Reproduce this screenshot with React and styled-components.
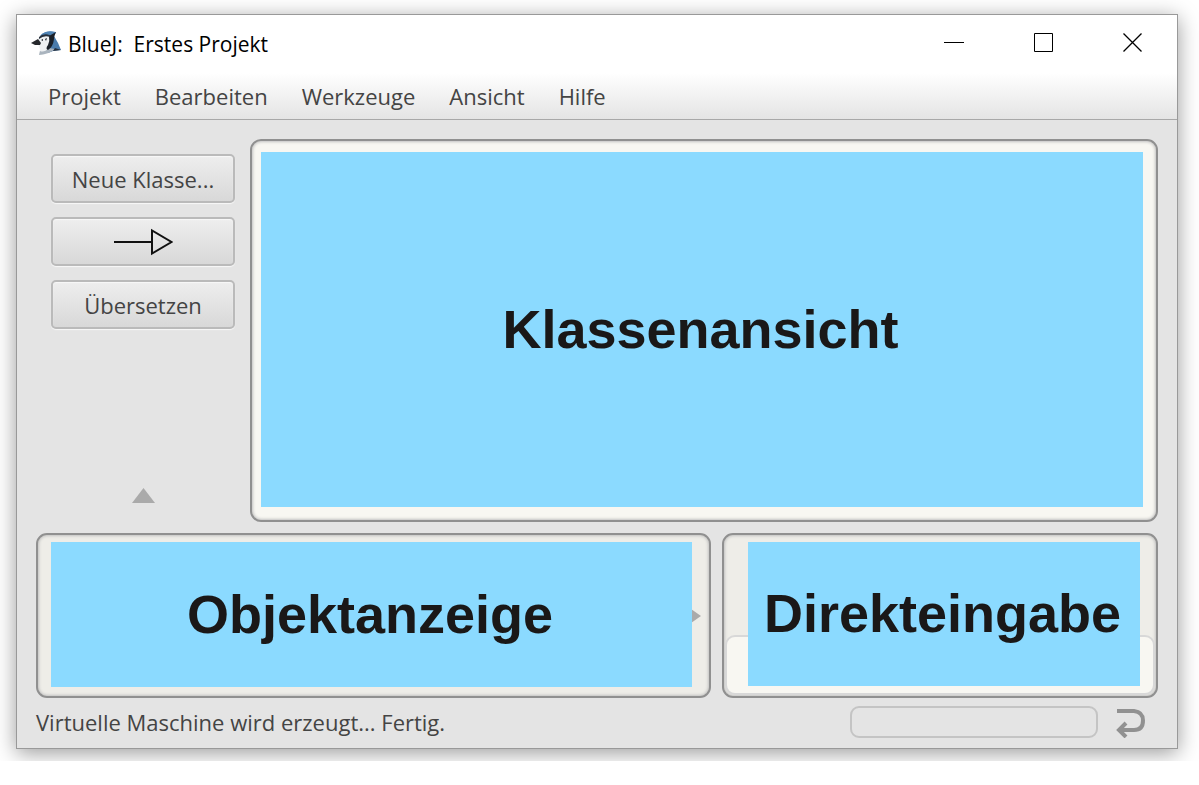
import React from "react";
import styled, { createGlobalStyle } from "styled-components";

//styling
const GlobalStyle = createGlobalStyle`
  * {
    box-sizing: border-box;
  }
  body {
    margin: 0;
    background: #fff;
    font-family: "Open Sans", "Noto Sans", sans-serif;
    font-size: 22px;
    line-height: 30px;
    color: #444;
  }
`;
const Desktop = styled.main`
  display: flex;
  min-height: calc(100vh - 24px);
  padding: 14px 21px 12px 16px;
  overflow: hidden;
`;
const Window = styled.section`
  flex: 1;
  display: flex;
  flex-direction: column;
  border: 1px solid #999;
  background: #e4e4e4;
  box-shadow: 0 4px 20px rgba(0, 0, 0, 0.4);
`;
const TitleBar = styled.header`
  display: flex;
  align-items: center;
  height: 58px;
  padding: 0 34px 0 14px;
  background: #fff;
  color: #000;
`;
const Title = styled.h1`
  flex: 1;
  margin: 0 0 0 6px;
  font-size: 21px;
  font-weight: 400;
  white-space: pre;
`;
const WindowButtons = styled.div`
  display: flex;
  gap: 70px;
  padding-bottom: 3px;
`;
const WindowButton = styled.button`
  display: flex;
  padding: 0;
  border: 0;
  background: none;
`;
const MenuBar = styled.nav`
  display: flex;
  align-items: center;
  gap: 34px;
  height: 47px;
  padding: 0 31px;
  border-bottom: 1px solid #a8a8a8;
  background: linear-gradient(#fff, #e4e4e4);
`;
const MenuItem = styled.button`
  padding: 0;
  border: 0;
  background: none;
  font: inherit;
  color: inherit;
`;
const Workspace = styled.div`
  flex: 1;
  display: flex;
  flex-direction: column;
  gap: 11px;
  padding: 19px 19px 0;
`;
const Row = styled.div`
  display: flex;
  flex: ${(props) => (props.$grow ? "1" : "0 0 165px")};
  gap: ${(props) => (props.$grow ? "15px" : "11px")};
`;
const Sidebar = styled.aside`
  display: flex;
  flex-direction: column;
  gap: 14px;
  width: 199px;
  padding: 15px 0 18px 15px;
`;
const ToolButton = styled.button`
  display: flex;
  align-items: center;
  justify-content: center;
  height: 49px;
  padding: 0;
  border: 2px solid #bababa;
  border-radius: 5px;
  background: linear-gradient(#eee, #d8d8d8);
  box-shadow: 0 1px 1px #f8f8f8, inset 0 1px 1px #f8f8f8;
  font: inherit;
  color: inherit;
`;
const Collapse = styled.button`
  display: flex;
  align-self: center;
  margin-top: auto;
  padding: 0;
  border: 0;
  background: none;
`;
const Panel = styled.section`
  position: relative;
  display: flex;
  align-items: flex-end;
  flex: ${(props) => props.$grow || 1} 1 0;
  border: 2px solid #909090;
  border-radius: 11px;
  background: ${(props) => props.$background || "#eeede8"};
  box-shadow: inset 0 0 3px 1px #c0c0c0;
`;
const Cover = styled.div`
  position: absolute;
  inset: ${(props) => props.$inset};
  display: flex;
  align-items: center;
  justify-content: center;
  padding: 0 3px 2px 0;
  background: #8bdaff;
`;
const CoverTitle = styled.h2`
  margin: 0;
  font-family: "Liberation Sans", Arial, sans-serif;
  font-size: 54px;
  line-height: 62px;
  font-weight: 700;
  color: #1a1818;
`;
const CodeInput = styled.input`
  width: 100%;
  height: 60px;
  margin: 0 1px 1px;
  border: 2px solid #d8d8d8;
  border-radius: 10px;
  background: #f8f7f2;
`;
const Expand = styled.button`
  display: flex;
  align-self: center;
  margin-left: auto;
  padding: 0 8px;
  border: 0;
  background: none;
`;
const StatusBar = styled.footer`
  display: flex;
  align-items: center;
  gap: 17px;
  height: 50px;
  padding: 0 31px 3px 19px;
`;
const StatusText = styled.p`
  flex: 1;
  margin: 0;
`;
const Activity = styled.div`
  width: 248px;
  height: 32px;
  border: 2px solid #c4c4c4;
  border-radius: 9px;
`;

const menus = ["Projekt", "Bearbeiten", "Werkzeuge", "Ansicht", "Hilfe"];

const BlueJay = () => (
  <svg width="31" height="28" viewBox="0 0 31 28" aria-hidden="true">
    <path d="M9 6 Q13 0 25 2 L23 6 Q27 12 30 20 L22 21 L17 23 L12 12 Z" fill="#4a7bab" />
    <path d="M7 8 Q13 3 20 7 L18 17 Q20 22 11 25 L8 25 L9 19 Q7 16 7 12 Z" fill="#eef0f2" />
    <path d="M8 25 L9 21 Q13 23 18 18 L24 19 Q19 24 8 25 Z" fill="#aab4be" />
    <path d="M0 13 L7 9 L10 13 L9 15 L4 15 Z" fill="#26282c" />
    <path d="M18 6 L25 2 Q23 6 23 9 Q22 17 17 20 Q14 19 17 15 Q19 11 18 6 Z" fill="#1b2028" />
    <path d="M8 7 Q12 3 19 5 L19 7 Q13 5 8 9 Z" fill="#27303c" />
    <path d="M11 4 Q16 0 24 2 L19 5 Q15 3 11 4 Z" fill="#4f84b5" />
    <path d="M10 10 L12 9 L12 11 Z M14 9 L16 8 L15 11 Z" fill="#1b2028" />
    <path d="M24 18 L30 20 L22 21 Z" fill="#27303c" />
  </svg>
);

function App() {
  return (
    <>
      <GlobalStyle />
      <Desktop>
        <Window>
          <TitleBar>
            <BlueJay />
            <Title>{"BlueJ:  Erstes Projekt"}</Title>
            <WindowButtons>
              <WindowButton aria-label="Minimieren">
                <svg width="20" height="20" stroke="#000"><path d="M0 9.5H20" /></svg>
              </WindowButton>
              <WindowButton aria-label="Maximieren">
                <svg width="19" height="20" stroke="#000" fill="none"><path d="M.5.5H18.5V18.5H.5Z" /></svg>
              </WindowButton>
              <WindowButton aria-label="Schließen">
                <svg width="20" height="20" stroke="#000" strokeWidth="1.3"><path d="M.5.5L18.5 18.5M18.5.5L.5 18.5" /></svg>
              </WindowButton>
            </WindowButtons>
          </TitleBar>

          <MenuBar>
            {menus.map((menu) => (
              <MenuItem key={menu}>{menu}</MenuItem>
            ))}
          </MenuBar>

          <Workspace>
            <Row $grow>
              <Sidebar>
                <ToolButton>Neue Klasse...</ToolButton>
                <ToolButton aria-label="Vererbung">
                  <svg width="60" height="28" stroke="#111" strokeWidth="2" fill="none">
                    <path d="M1 14H39M39 2.5V25.5L58.5 14Z" />
                  </svg>
                </ToolButton>
                <ToolButton>Übersetzen</ToolButton>
                <Collapse aria-label="Einklappen">
                  <svg width="24" height="16"><path d="M12.5 0L24 15H1Z" fill="#aaa" /></svg>
                </Collapse>
              </Sidebar>
              <Panel $background="#f8f7f2">
                <Cover $inset="11px 13px 13px 9px">
                  <CoverTitle>Klassenansicht</CoverTitle>
                </Cover>
              </Panel>
            </Row>
            <Row>
              <Panel $grow={676}>
                <Expand aria-label="Ausklappen">
                  <svg width="10" height="14"><path d="M0 0L10 7L0 14Z" fill="#aaa" /></svg>
                </Expand>
                <Cover $inset="7px 17px 9px 13px">
                  <CoverTitle>Objektanzeige</CoverTitle>
                </Cover>
              </Panel>
              <Panel $grow={435}>
                <CodeInput type="text" aria-label="Direkteingabe" />
                <Cover $inset="7px 16px 10px 24px">
                  <CoverTitle>Direkteingabe</CoverTitle>
                </Cover>
              </Panel>
            </Row>
          </Workspace>

          <StatusBar>
            <StatusText>Virtuelle Maschine wird erzeugt... Fertig.</StatusText>
            <Activity />
            <WindowButton aria-label="Zurücksetzen">
              <svg width="31" height="32" fill="none" stroke="#919191" strokeWidth="4">
                <path d="M2 5H19Q28 6 28 14.5Q28 24 19 24H4M11 17L4 24L11 31" />
              </svg>
            </WindowButton>
          </StatusBar>
        </Window>
      </Desktop>
    </>
  );
}

export default App;
